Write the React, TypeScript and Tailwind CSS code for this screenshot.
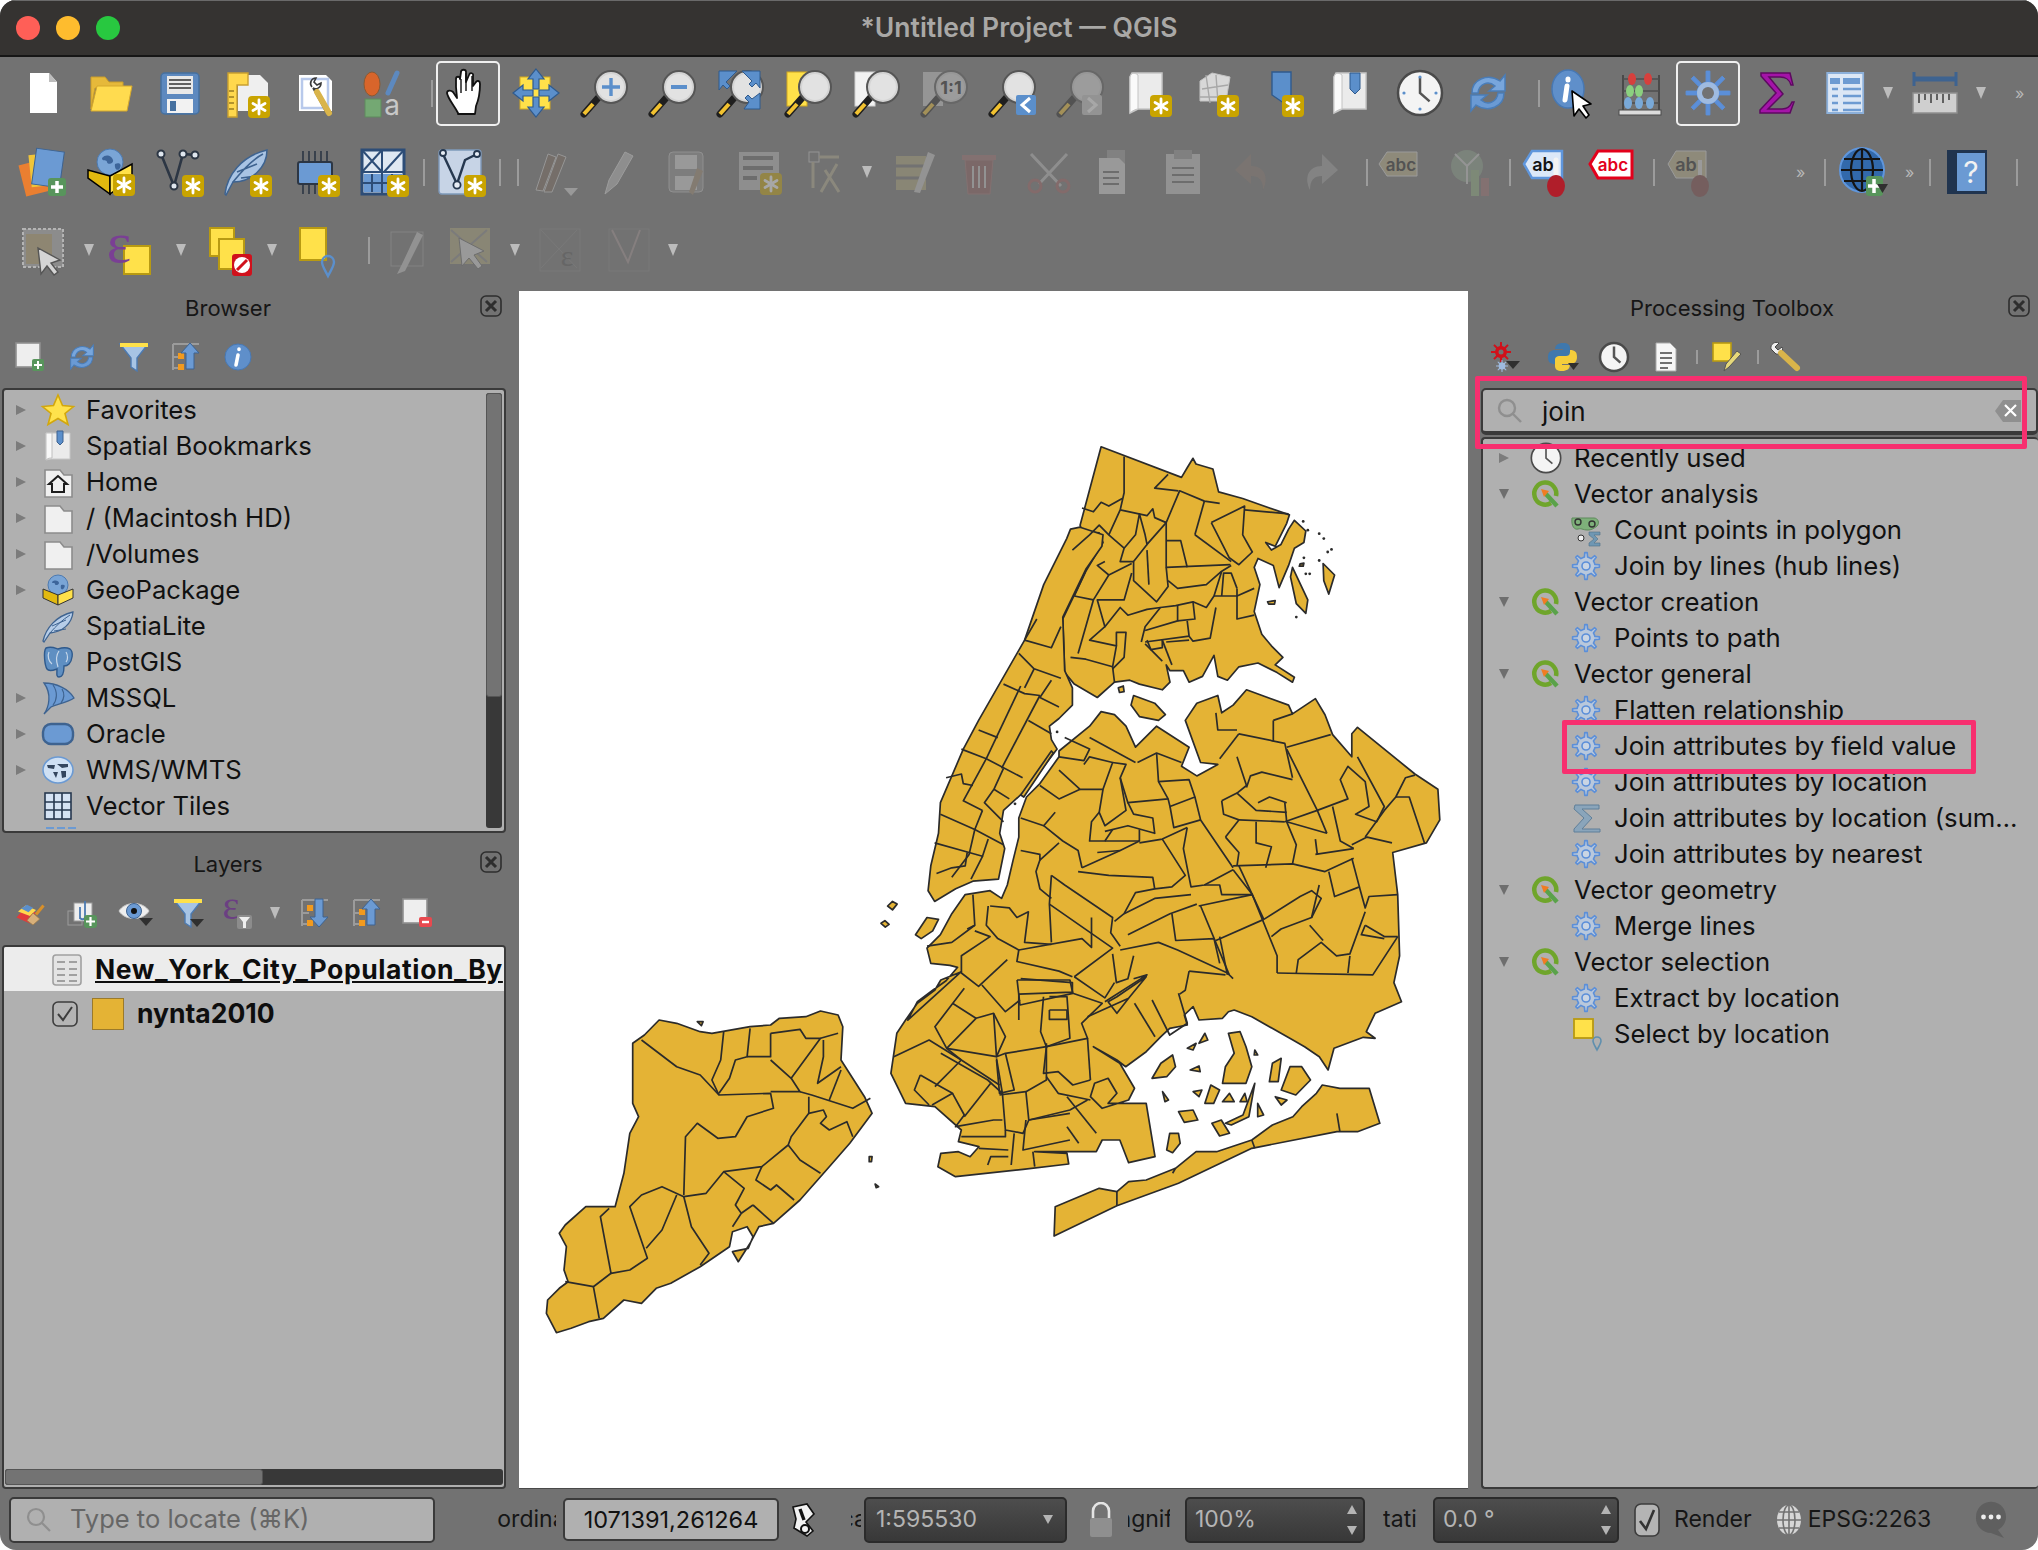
import type { ReactNode } from 'react';

// scale factors of the two map crops the outlines were traced from
const q9 = (s: string) =>
  s.trim().split(/\s+/).map((p) => {
    const [x, y] = p.split(',').map(Number);
    return `${(860 + x / 2.613).toFixed(1)},${(420 + y / 2.613).toFixed(1)}`;
  }).join(' ');

const q10 = (s: string) =>
  s.trim().split(/\s+/).map((p) => {
    const [x, y] = p.split(',').map(Number);
    return `${(530 + x / 1.704).toFixed(1)},${(960 + y / 3).toFixed(1)}`;
  }).join(' ');

const bronx = `630,70 840,150 855,125 870,100 878,115 922,128 937,188 1000,205 1122,248 1115,270 1085,330 1060,320 1075,340 1100,325 1120,285 1135,262 1165,290 1160,320 1135,335 1120,380 1095,438 1080,380 1040,362 1030,385 1045,430 1030,500 1050,560 1075,590 1105,620 1085,640 1135,672 1130,685 1090,660 1040,635 990,645 960,680 935,670 925,615 895,670 860,685 845,655 810,655 800,640 810,685 790,705 730,690 705,680 665,685 620,725 560,690 535,660 530,520 590,395 635,320 625,295 580,290 575,275`;
const manhattan = `575,280 635,300 632,330 590,390 530,515 535,655 555,700 555,745 520,780 495,800 500,835 515,860 430,970 375,1020 365,1080 378,1120 362,1200 295,1205 250,1225 195,1258 178,1230 185,1165 205,1080 210,1000 270,860 310,785 430,575 480,430 540,310 550,285`;
const queensTop = `520,865 600,800 630,762 665,770 695,800 720,855 775,800 860,855 840,905 880,930 935,900 890,895 850,785 880,740 935,720 945,765 975,745 1010,705 1120,745 1130,768 1190,728 1215,770 1235,822 1285,880 1285,820 1300,803 1450,925 1510,965 1515,1045 1480,1105 1392,1130 1405,1240 1410,1400 1395,1470 1415,1520`;
const southShore = `1440,160 1425,215 1440,235 1420,232 1370,265 1360,330 1345,290 1320,260 1300,240 1230,170 1200,150 1190,155 1180,175 1140,180 1130,140 1115,165 1120,195 1090,205 1075,230 1050,275 1015,320 1000,300 960,260 1005,310 1030,385 1020,420 975,445 955,410 962,370 985,355 1000,400 985,430 1050,430 1065,590 1020,608 1005,540 975,540 965,575 860,575 915,580 918,612 840,628 725,650 695,620 700,580 730,575 750,590 765,560 730,545 735,510 690,440 640,430 615,340 625,220 640,180 660,130 690,90 700,60 735,35`;
const brooklynWest = `125,1568 150,1520 190,1490 225,1465 255,1430 235,1425 185,1420 175,1380 210,1345 240,1290 275,1240 340,1230 370,1250 385,1215 400,1150 415,1090 415,1040 435,985 470,950 520,880`;
const rockaway = `893,828 895,740 970,685 1000,695 1020,665 1050,660 1100,625 1135,575 1170,575 1230,540 1265,495 1300,470 1315,440 1340,400 1350,375 1380,385 1430,385 1448,490 1410,515 1375,515 1230,565 1105,670 1000,737`;
const staten = `45,1118 28,1060 30,1020 50,985 65,965 58,930 62,860 50,820 60,795 95,740 145,740 160,640 170,520 185,470 175,430 175,250 195,225 220,180 250,190 290,215 310,220 375,200 410,195 425,175 470,170 495,153 525,165 533,200 530,300 570,410 583,460 545,550 510,620 460,720 415,790 390,800 375,850 355,905 345,875 372,865 380,830 370,800 345,815 340,860 290,920 240,970 215,985 190,1030 160,1020 125,1075 100,1085 70,1105`;

const islands9 = [
  '1210,375 1240,405 1225,455 1212,420', '1130,385 1170,470 1165,505 1140,480 1125,410', '715,720 770,740 798,770 780,785 730,775 708,745',
  '145,1345 175,1300 205,1305 190,1335 160,1355', '72,1270 85,1258 97,1265 85,1280', '55,1315 65,1308 76,1318 66,1325', '675,700 688,695 690,710 678,712',
  '500,865 420,980 428,985 505,870', '1065,475 1085,472 1083,481 1068,481', '1150,376 1160,374 1158,382 1148,382',
];
const specks9 = ['1158,265', '1170,288', '1200,297', '1212,310', '1222,345', '1232,338', '1160,360', '1200,367', '1165,402', '1175,402', '1140,515', '405,1003', '515,815'];
const islands10 = [
  '1060,355 1075,310 1095,285 1100,320 1085,350', '1190,220 1210,215 1220,260 1230,320 1220,370 1180,370 1185,320 1200,280', '1120,265 1135,250 1130,270',
  '1140,250 1150,220 1155,240', '1260,365 1265,310 1280,295 1275,365', '1280,390 1295,320 1315,320 1330,360 1305,405', '1105,455 1130,450 1138,480 1115,487',
  '1162,490 1178,480 1192,520 1175,528', '1085,570 1090,520 1105,520 1108,550 1095,578', '1130,395 1145,390 1140,410', '1150,430 1160,375 1175,390 1165,430',
  '1180,425 1192,400 1200,425', '1210,425 1218,400 1222,425', '1240,430 1250,465 1240,470', '1185,490 1215,465 1235,370 1225,470 1195,495',
  '1270,410 1290,420 1280,435', '1125,330 1140,318 1142,335', '1078,395 1088,420 1082,425', '1235,270 1240,285 1234,285', '578,590 583,590 582,605 578,605', '588,672 594,680 590,683',
  '285,185 295,185 292,197',
];
const lines9 = [
  '690,95 690,190 680,235', '580,230 610,240 630,215 650,225 685,205', '680,235 750,250 765,232 770,255 800,268 835,185 900,212 940,218', '832,185 770,178 805,142',
  '800,268 800,385 968,378', '800,315 838,315 855,385', '875,300 970,370', '900,212 875,300', '918,268 1005,225 1000,300 1025,345 990,378 965,360 918,268', '1005,235 1120,245',
  '680,235 650,300 690,335 720,300 730,245 745,300 750,325 800,268', '555,340 600,300 625,275 650,300', '750,325 715,370 715,420 775,475 805,435 800,385', '750,340 755,430',
  '690,335 680,370 715,370', '640,370 620,380 650,405 710,375', '650,405 610,470 560,460 590,395', '710,400 690,470 620,470 640,540 680,490 700,510 750,495 785,490',
  '805,420 830,440 905,430 945,395 970,380', '945,395 925,460 905,490 870,475 825,485 785,490 745,540 735,580', '830,485 830,525 745,550', '870,475 875,520 830,525',
  '855,525 860,565 745,580', '860,565 870,578 915,570 930,490', '925,460 985,460 1030,440', '985,440 985,520 1030,510', '945,460 950,400 970,400 985,440', '610,470 570,610',
  '640,540 600,575 670,590 660,645 590,625 550,620', '670,590 670,555 695,555 690,620 660,650', '660,645 665,685', '745,585 790,630', '750,575 760,600 790,595 790,575', '790,575 815,640', '860,575 800,580',
  '462,520 430,575 500,595 525,540', '415,610 455,650 525,675', '455,650 430,700', '500,680 470,725 520,750', '375,690 430,715 470,720', '420,695 330,885', '470,720 370,910', '440,785 500,820',
  '310,810 360,830', '265,860 330,885 425,935', '330,885 270,995 320,1020', '375,910 350,965 390,990', '350,965 325,1000 375,1050', '225,935 265,925 270,950 295,955', '210,1030 300,1070 375,1110',
  '320,1020 300,1070 285,1135 240,1195', '195,1105 285,1130 320,1140 290,1200', '335,1095 320,1140', '280,1130 275,1165 240,1170 200,1185',
  '600,830 720,895', '520,880 585,890 600,860 535,830', '520,915 575,965 635,965 660,895 600,880 585,900', '725,895 775,870 840,895', '660,895 695,900 680,935 700,1000 805,990 780,945 775,870', '780,945 860,940 875,985 810,1010 805,990',
  '810,1010 820,1065 890,1045', '875,985 890,1045 975,1170', '635,965 625,1025 640,1060 695,1020 680,935', '700,1000 715,1030 765,1040 770,1080 700,1060 640,1075', '625,1025 605,1050 600,1100 640,1100 660,1070', '640,1100 730,1100 730,1070',
  '730,1105 790,1095 855,1065', '575,965 520,990 470,955', '420,1040 480,1060 510,1025', '480,1060 530,1100 570,1125 580,1170', '420,1125 470,1135 470,1150 520,1105', '470,1150 460,1180 470,1225 500,1250', '580,1170 680,1125 730,1100', '680,1125 620,1130',
  '570,1180 650,1190 765,1195 770,1225', '790,1095 850,1190 815,1220 770,1225 720,1235 690,1290 665,1310', '855,1065 845,1120 865,1220 900,1215 975,1175', '865,1240 770,1250 690,1290', '880,1265 810,1290 700,1345', '900,1215 940,1215 945,1240 1025,1240',
  '975,1175 1025,1240 1090,1400 1090,1445', '975,1165 1130,1160 1215,1180 1290,1145', '990,1165 1055,1305', '885,1270 1025,1240', '890,1270 965,1450', '1055,1305 1150,1245 1180,1230 1205,1250 1180,1300 1100,1330 1075,1350', '930,1360 1055,1305',
  '1130,1160 1140,1110 1115,1050 1220,1080', '955,1090 990,1130 985,1165', '990,1045 955,1090', '990,1045 1110,1050', '1035,1050 1035,1105 1075,1115 1060,1170', '945,995 985,975 1035,1020 1115,1025', '945,995 950,1030 990,1045', '1115,1050 1110,1000',
  '1010,960 1020,930 1050,920 1130,940', '1040,1000 1070,985 1115,1000', '990,820 940,885', '990,820 1110,845 1130,935', '930,765 935,810 985,810', '985,880 1010,955 985,975', '1080,785 1080,840', '1130,768 1080,785', '1115,855 1230,822',
  '1115,860 1195,1020 1220,1080', '1195,1020 1275,990 1255,940 1275,905 1320,945 1330,1010 1295,1030 1350,1050 1370,1010 1300,880', '1235,1010 1255,1100 1290,1120', '1110,1050 1195,1020', '1320,1090 1370,1020 1400,985 1425,935 1450,928', '1400,985 1435,985 1475,1105',
  '1285,1110 1325,1090 1390,1105', '1290,1120 1190,1135', '1190,1095 1195,1135', '1285,1145 1305,1220 1240,1245 1225,1180', '1305,1220 1320,1275 1330,1245 1405,1240', '1200,1215 1180,1300', '1320,1285 1280,1395 1245,1400 1205,1365 1145,1410 1140,1445', '1175,1320 1210,1360',
  '1320,1320 1370,1350 1405,1350', '1320,1320 1310,1345 1370,1355', '1405,1350 1340,1450 1090,1445', '1280,1400 1275,1445', '815,1290 825,1360 925,1355 940,1420', '940,1350 960,1450', '680,1385 780,1365 830,1385 960,1445 975,1460',
  '495,1265 660,1380 560,1455', '500,1190 535,1215 660,1300 655,1340 680,1375', '500,1190 495,1265 500,1365', '415,1385 580,1355 605,1378 605,1300', '340,1270 390,1275 410,1300 440,1285 430,1365 500,1370', '295,1240 300,1320 280,1330', '335,1270 330,1320 360,1355 415,1385 410,1415 520,1440 555,1455',
  '300,1335 340,1350 265,1400 265,1445 310,1480 385,1410', '175,1375 240,1365 300,1320', '420,1460 555,1470 555,1495 415,1500 415,1568', '660,1395 670,1470 700,1460 715,1400', '665,1470 640,1510 560,1455', '715,1460 750,1450 640,1520', '860,1440 850,1490 835,1500', '860,1440 955,1450',
];
const lines10 = [
  '740,85 690,200 710,265 760,175 720,130', '760,175 790,160 810,230 795,290 710,265', '795,295 805,400 780,360 700,280', '830,60 835,135 925,100 920,60 830,60', '770,75 810,155 835,120', '875,110 870,215 880,260 810,280 795,290 790,160', '880,260 950,235 940,190 975,130 925,100',
  '950,235 955,360', '950,170 1020,115 1050,50 1000,110 985,125 1000,160 1020,115', '1060,120 1090,225 1120,190 1105,100', '1030,130 1065,230', '885,110 915,110 920,235 880,260', '885,150 915,150 915,178 885,178 885,150', '810,280 825,390 800,400 795,300', '880,250 880,360 845,395 800,405',
  '880,260 875,340 900,335 925,375 955,360', '805,400 810,510 840,520 850,480 920,450 950,420', '845,395 850,480 920,460', '880,350 900,400 955,420', '620,290 680,240 735,300 800,375', '665,345 655,390 680,435', '665,345 700,380 720,400 685,435', '735,300 690,380', '720,400 740,465 725,500 790,480 805,480', '785,370 740,470',
  '710,265 735,300', '810,510 810,530 735,530', '825,520 820,615', '857,575 860,620', '780,615 785,590 815,590', '765,565 815,570', '845,480 840,570 920,540', '915,410 965,520', '915,500 935,550', '1095,640 1100,625',
  '1000,695 1000,737', '1230,540 1235,565', '1375,460 1380,515',
  '190,240 250,320 290,345 322,405 410,400 415,445 370,470 350,530 320,535 285,490 265,530 262,705', '330,215 325,300 310,360 322,405', '375,205 370,290 350,300 340,355 322,400', '410,220 410,290 370,290', '410,220 460,208 470,235 495,235 445,355 410,300', '495,235 525,220', '500,240 500,290 490,370 530,320',
  '445,355 460,395 410,395', '460,395 480,405 550,445 580,415', '530,330 510,420', '475,410 475,460 445,530 440,555 395,620 330,635 300,700 262,710 225,680 190,705 170,740 200,895 170,930 138,940 120,770 135,745', '475,460 500,450 505,470 495,490 510,510 540,485 550,530', '440,555 460,600 495,640',
  '395,620 385,660 410,690 420,675 450,720', '330,635 365,685 350,735 360,760 345,800', '380,735 360,760', '380,735 415,790', '250,705 225,810 198,865', '262,710 275,800 305,880 290,915', '138,940 108,980 118,1075', '108,980 60,965',
];

function NycMap() {
  return (
    <svg viewBox="519 291 949 1197" className="w-full h-full">
      <g fill="#e4b335" stroke="#2b2b2b" strokeWidth="1.7" strokeLinejoin="round">
        <polygon points={q9(bronx)} />
        <polygon points={`${q9(queensTop)} ${q10(southShore)} ${q9(brooklynWest)}`} />
        <polygon points={q9(manhattan)} />
        <polygon points={q10(rockaway)} />
        <polygon points={q10(staten)} />
        {islands9.map((p) => <polygon key={p} points={q9(p)} />)}
        {islands10.map((p) => <polygon key={p} points={q10(p)} />)}
        {specks9.map((p) => {
          const [x, y] = q9(p).split(',');
          return <circle key={p} cx={x} cy={y} r="1.4" fill="#2b2b2b" stroke="none" />;
        })}
      </g>
      <g fill="none" stroke="#2b2b2b" strokeWidth="1.7" strokeLinejoin="round">
        {lines9.map((p) => <polyline key={p} points={q9(p)} />)}
        {lines10.map((p) => <polyline key={p} points={q10(p)} />)}
      </g>
    </svg>
  );
}

function Ico({ children, className = '' }: { children: ReactNode; className?: string }) {
  return <svg viewBox="0 0 48 48" className={`w-[48px] h-[48px] shrink-0 overflow-visible ${className}`}>{children}</svg>;
}

function Small({ children, className = '' }: { children: ReactNode; className?: string }) {
  return <svg viewBox="0 0 32 32" className={`w-[32px] h-[32px] shrink-0 overflow-visible ${className}`}>{children}</svg>;
}

const gearPath = (cx: number, cy: number, r1: number, r2: number, n = 8) => {
  const pts: string[] = [];
  for (let i = 0; i < n; i++) {
    const a = (i / n) * Math.PI * 2 - Math.PI / 2;
    const w = Math.PI / n;
    [[r1, a - w], [r1, a - w * 0.45], [r2, a - w * 0.22], [r2, a + w * 0.22], [r1, a + w * 0.45]].forEach(([r, t]) => {
      pts.push(`${(cx + r * Math.cos(t)).toFixed(1)} ${(cy + r * Math.sin(t)).toFixed(1)}`);
    });
  }
  return `M${pts.join('L')}Z`;
};

function Star({ x, y }: { x: number; y: number }) {
  return (
    <g>
      <rect x={x - 11} y={y - 11} width="22" height="22" rx="4" fill="#c9a400" />
      <g stroke="#fff" strokeWidth="2.8" strokeLinecap="round">
        <line x1={x} y1={y - 7} x2={x} y2={y + 7} />
        <line x1={x - 6} y1={y - 3.5} x2={x + 6} y2={y + 3.5} />
        <line x1={x - 6} y1={y + 3.5} x2={x + 6} y2={y - 3.5} />
      </g>
    </g>
  );
}

function Lens({ children }: { children?: ReactNode }) {
  return (
    <>
      <path d="M4 45 L18 29" stroke="#1f1f1f" strokeWidth="7" strokeLinecap="round" />
      <path d="M4 45 L13 35" stroke="#f2c230" strokeWidth="4" />
      <ellipse cx="31" cy="18" rx="16" ry="16" fill="#d4d4d4" stroke="#565656" strokeWidth="2" />
      <ellipse cx="31" cy="18" rx="13" ry="13" fill="#e2e2e2" />
      {children}
    </>
  );
}

function Clock({ s = 48 }: { s?: number }) {
  const c = s / 2;
  return (
    <>
      <circle cx={c} cy={c} r={c - 2} fill="#f4f4f4" stroke="#4a4a4a" strokeWidth="2.5" />
      <path d={`M${c} ${c * 0.35}V${c}L${c * 1.4} ${c * 1.35}`} fill="none" stroke="#555" strokeWidth="2.5" />
    </>
  );
}

function Refresh() {
  return (
    <>
      <path d="M8 24C8 10 24 4 36 12L41 6v16H25l6-5C24 11 15 15 14 24z" fill="#78a6dc" stroke="#4a7db8" strokeWidth="1.5" />
      <path d="M40 24C40 38 24 44 12 36L7 42V26h16l-6 5C24 37 33 33 34 24z" fill="#6a9ad4" stroke="#4a7db8" strokeWidth="1.5" />
    </>
  );
}

function Paper() {
  return (
    <>
      <path d="M8 4h30v36H14l-8 4V8z" fill="#ebebeb" stroke="#c6c6c6" strokeWidth="1.5" />
      <path d="M6 8v36c3-3 7-4 8-4V6C10 3 7 4 6 8z" fill="#fafafa" stroke="#c4c4c4" />
    </>
  );
}

function Gray({ children }: { children: ReactNode }) {
  return <g opacity="0.38">{children}</g>;
}

const blueGear = (
  <>
    <path d={gearPath(16, 16, 9, 13.5)} fill="#b9c8dc" stroke="#5b8fd9" strokeWidth="1.6" strokeLinejoin="round" />
    <circle cx="16" cy="16" r="4" fill="#c9d5e4" stroke="#5b8fd9" strokeWidth="1.6" />
  </>
);

const qgisLogo = (
  <>
    <path d="M21 25a11 11 0 1 1 5-7" fill="none" stroke="#6fa52b" strokeWidth="4.5" />
    <path d="M15 15L27 28" stroke="#5aa24a" strokeWidth="4.5" />
    <path d="M11 11l8 2-5 6z" fill="#f07c22" />
  </>
);

const Arrow = ({ className = '' }: { className?: string }) => (
  <svg viewBox="0 0 12 14" className={`w-[12px] h-[14px] shrink-0 ${className}`}><path d="M1 1h10L6 13z" fill="#bcbcbc" /></svg>
);

const Sep = ({ className = '' }: { className?: string }) => <div className={`w-[2px] h-[27px] shrink-0 bg-[#9c9c9c] ${className}`} />;

const More = ({ className = '' }: { className?: string }) => (
  <span className={`w-[14px] shrink-0 text-[16px] leading-none text-[#b8b8b8] ${className}`}>»</span>
);

function Close({ className = '' }: { className?: string }) {
  return (
    <svg viewBox="0 0 24 24" className={`w-[24px] h-[24px] ${className}`}>
      <rect x="2" y="2" width="20" height="20" rx="5" fill="none" stroke="#2e2e2e" strokeWidth="1.6" />
      <path d="M7 7l10 10M17 7L7 17" stroke="#2e2e2e" strokeWidth="3" />
    </svg>
  );
}

function TopRow1() {
  return (
    <div className="flex items-center h-[72px] pl-[20px] gap-5">
      <Ico><path d="M10 4h19l8 9v31H10z" fill="#fff" /><path d="M29 4v9h8z" fill="#bdbdbd" /></Ico>
      <Ico><path d="M3 8h14l4 5h14v6H7L3 40z" fill="#e6b93a" stroke="#c99d2a" /><path d="M9 17h35l-5 25H3z" fill="#ffdb4f" stroke="#d5a82c" /></Ico>
      <Ico>
        <rect x="5" y="4" width="38" height="41" rx="4" fill="#5d89bf" stroke="#46709f" strokeWidth="1.5" />
        <rect x="11" y="7" width="26" height="18" fill="#e9e9e9" />
        <path d="M13 11h22M13 15h22M13 19h22" stroke="#5f5f5f" strokeWidth="2" />
        <rect x="11" y="30" width="26" height="14" fill="#f2f2f2" />
        <rect x="14" y="32" width="6" height="10" fill="#46709f" />
      </Ico>
      <Ico>
        <path d="M14 6h22l8 8v28H14z" fill="#efefef" />
        <path d="M4 4h20v12H13v32H4z" fill="#ffd84d" stroke="#c9a030" strokeWidth="1.4" />
        <path d="M5 22h5M5 28h5M5 34h5M5 40h5" stroke="#9b7c22" strokeWidth="1.5" />
        <Star x={35} y={38} />
      </Ico>
      <Ico>
        <path d="M7 6h27l6 6v30H7z" fill="#fff" />
        <rect x="10" y="10" width="26" height="29" fill="none" stroke="#b8c9eb" strokeWidth="2.5" />
        <path d="M20 18c-3-3-1-9 4-9l-2 4 3 3 4-2c0 5-5 7-8 5l13 24" fill="none" stroke="#3a3a3a" strokeWidth="1.6" />
        <path d="M25 23l12 21" stroke="#d9b44a" strokeWidth="6" strokeLinecap="round" />
      </Ico>
      <Ico>
        <ellipse cx="12" cy="15" rx="8" ry="12" fill="#d8652b" stroke="#8b5a33" />
        <path d="M28 24l9-20" stroke="#5d89bf" strokeWidth="5" strokeLinecap="round" />
        <rect x="5" y="30" width="16" height="18" fill="#74a873" stroke="#5f8a5e" />
        <text x="32" y="46" fontSize="28" fill="#c8c8c8" textAnchor="middle" fontFamily="Inter">a</text>
      </Ico>
      <Sep className="ml-[3px]" />
      <div className="flex items-center justify-center w-[64px] h-[65px] -ml-[17px] shrink-0 border-2 border-[#f0f0f0] rounded-[5px]">
        <Ico>
          <path d="M14 44C10 36 4 30 3 24c0-3 4-3 6-1l4 6-1-11V10c0-3 4-3 4 0l1-7c0-3 5-3 5 0v10l3-7c1-3 5-2 4 1v10l3-4c2-2 4-1 4 2 0 10-1 15-4 22l-1 8H14z" fill="#fff" stroke="#111" strokeWidth="1.8" strokeLinejoin="round" />
          <path d="M17 10v14M22 4v18M28 7v15" stroke="#111" strokeWidth="1.4" />
        </Ico>
      </div>
      <Ico className="-ml-[8px]">
        <rect x="8" y="8" width="30" height="32" fill="#ffe14a" stroke="#d1a820" />
        <g fill="#5b8fcb" stroke="#2f5a8d" strokeWidth="1.2">
          <path d="M24 0l8 10h-5v10h-6V10h-5z" /><path d="M24 48l8-10h-5V28h-6v10h-5z" />
          <path d="M1 24l10-8v5h10v6H11v5z" /><path d="M47 24l-10-8v5H27v6h10v5z" />
        </g>
      </Ico>
      <Ico><Lens><path d="M31 9v18M22 18h18" stroke="#5b8fcb" strokeWidth="3.4" /></Lens></Ico>
      <Ico><Lens><path d="M23 18h16" stroke="#5b8fcb" strokeWidth="4" /></Lens></Ico>
      <Ico>
        <Lens />
        <path d="M3 2h18L10 13l4 4-3 3-4-4-4 5zM44 2H26l10 10-3 3 3 3 4-4 4 5zM44 40H28l5-7-4-4 3-3 4 4 8-6z" fill="#5b8fcb" stroke="#2f5a8d" />
      </Ico>
      <Ico><rect x="3" y="3" width="20" height="34" fill="#ffe14a" stroke="#d1a820" /><Lens /></Ico>
      <Ico><rect x="3" y="3" width="20" height="34" fill="#f2f2f2" stroke="#cfcfcf" /><Lens /></Ico>
      <Ico><Gray><rect x="3" y="3" width="20" height="34" fill="#cfcfcf" /><Lens /><text x="31" y="25" fontSize="18" fontWeight="700" textAnchor="middle" fill="#222" fontFamily="Inter">1:1</text></Gray></Ico>
      <Ico><Lens /><rect x="28" y="26" width="20" height="20" rx="2" fill="#5b8fcb" /><path d="M42 29l-8 7 8 7" fill="none" stroke="#fff" strokeWidth="3" /></Ico>
      <Ico><Gray><Lens /><rect x="26" y="26" width="20" height="20" rx="2" fill="#c9c9c9" /><path d="M32 29l8 7-8 7" fill="none" stroke="#fff" strokeWidth="3" /></Gray></Ico>
      <Ico><Paper /><Star x={37} y={37} /></Ico>
      <Ico>
        <path d="M8 12l12-8 18 4-4 24H8z" fill="#d8d8d8" stroke="#c4c4c4" />
        <path d="M10 20l26-4M14 6l4 28M24 6l2 28M8 28l24 0" stroke="#a8a8a8" strokeWidth="1.4" fill="none" />
        <Star x={36} y={37} />
      </Ico>
      <Ico><path d="M10 3h19v36L10 26z" fill="#5b8fcb" stroke="#2f5a8d" strokeWidth="1.4" transform="translate(2 0)" /><Star x={33} y={37} /></Ico>
      <Ico><Paper /><path d="M22 4h10v16l-5 5-5-5z" fill="#5b8fcb" stroke="#2f5a8d" /></Ico>
      <Ico><Clock /><g fill="#5b8fcb"><circle cx="24" cy="8" r="1.6" /><circle cx="24" cy="40" r="1.6" /><circle cx="8" cy="24" r="1.6" /><circle cx="40" cy="24" r="1.6" /></g></Ico>
      <Ico><Refresh /></Ico>
      <Sep className="ml-[6px]" />
      <Ico className="-ml-[12px]">
        <ellipse cx="20" cy="20" rx="16" ry="19" fill="#5f8fca" stroke="#4878b3" strokeWidth="1.5" />
        <path d="M20 10v1M19 17l-2 14" stroke="#fff" strokeWidth="5" strokeLinecap="round" />
        <path d="M24 22l2 25 5-7 7 9 3-3-6-9 8-2z" fill="#fff" stroke="#000" strokeWidth="1.6" strokeLinejoin="round" />
      </Ico>
      <Ico>
        <path d="M7 6v37M43 6v37M3 43h42" stroke="#4a4a4a" strokeWidth="2" />
        <rect x="3" y="41" width="42" height="5" fill="#dcdcdc" stroke="#4a4a4a" />
        <path d="M7 10h36M7 22h36M7 34h36" stroke="#4f4f4f" strokeWidth="1.5" />
        <ellipse cx="16" cy="10" rx="4" ry="6" fill="#d6403d" /><ellipse cx="32" cy="10" rx="4" ry="6" fill="#d6403d" />
        <ellipse cx="14" cy="22" rx="4" ry="6" fill="#8bd07f" /><ellipse cx="23" cy="22" rx="4" ry="6" fill="#8bd07f" />
        <ellipse cx="12" cy="34" rx="4" ry="6" fill="#79a9d8" /><ellipse cx="23" cy="34" rx="4" ry="6" fill="#79a9d8" /><ellipse cx="34" cy="34" rx="4" ry="6" fill="#79a9d8" />
      </Ico>
      <div className="flex items-center justify-center w-[64px] h-[65px] -ml-[8px] shrink-0 border-2 border-[#f0f0f0] rounded-[5px]">
        <Ico>
          <path d={gearPath(24, 24, 11, 22)} fill="#5b8fd9" stroke="#5b8fd9" strokeWidth="1" strokeLinejoin="round" />
          <circle cx="24" cy="24" r="11" fill="#9fbbe0" />
          <circle cx="24" cy="24" r="6" fill="#727272" />
        </Ico>
      </div>
      <Ico className="-ml-[8px]"><path d="M9 4h29l3 12h-2c-2-6-5-8-11-8H17l14 17-15 15h14c5 0 8-2 10-7h2l-4 11H8v-3l16-17L9 7z" fill="#a414a8" stroke="#5d0a60" strokeWidth="1.5" /></Ico>
      <Ico>
        <rect x="8" y="4" width="40" height="40" transform="translate(0 0) scale(0.9 1)" fill="#dce7f5" stroke="#8cb0da" strokeWidth="2" />
        <rect x="10" y="9" width="10" height="6" fill="#6d9bd2" /><rect x="23" y="9" width="17" height="6" fill="#6d9bd2" />
        <path d="M12 20h6M23 20h18M12 27h6M23 27h18M12 34h6M23 34h18M12 41h6M23 41h18" stroke="#6d9bd2" strokeWidth="2.4" />
      </Ico>
      <Arrow className="-ml-[6px]" />
      <Ico className="-ml-[3px]">
        <path d="M3 3v14M45 3v14" stroke="#3e6390" strokeWidth="3" /><path d="M3 10h42" stroke="#3e6390" strokeWidth="5" />
        <rect x="2" y="24" width="44" height="20" fill="#cfcfcf" stroke="#8f8f8f" strokeWidth="1.5" />
        <path d="M8 25v9M14 25v6M20 25v9M26 25v6M32 25v9M38 25v6" stroke="#444" strokeWidth="1.6" />
      </Ico>
      <Arrow className="-ml-[4px]" />
      <More className="ml-[8px]" />
    </div>
  );
}

function TopRow2() {
  return (
    <div className="flex items-center h-[76px] mt-[5px] pl-[20px]">
      <Ico>
        <rect x="2" y="14" width="26" height="32" fill="#ea7f31" transform="rotate(-14 14 30)" />
        <rect x="10" y="6" width="26" height="32" fill="#f0c53a" transform="rotate(-6 22 22)" />
        <rect x="14" y="2" width="28" height="36" fill="#6b9ad3" stroke="#3e6390" transform="rotate(8 28 20)" />
        <rect x="28" y="30" width="18" height="18" rx="3" fill="#58955c" /><path d="M37 33v12M31 39h12" stroke="#fff" strokeWidth="3.5" />
      </Ico>
      <Ico className="ml-[20px]">
        <circle cx="22" cy="14" r="13" fill="#7aa5d6" stroke="#4c7ab1" /><path d="M14 10c4-5 10-2 11 2s-6 5-6 2-5 0-5-4zM27 16c4-2 7 0 5 4s-6 1-5-4z" fill="#3d659a" />
        <path d="M0 22v8L22 46V28z" fill="#e2b90f" stroke="#000" strokeWidth="1.5" /><path d="M22 46L44 30V16L22 28z" fill="#ffe14a" stroke="#000" strokeWidth="1.5" />
        <Star x={36} y={37} />
      </Ico>
      <Ico className="ml-[19px]">
        <path d="M6 6l13 32L28 6l12 1" fill="none" stroke="#2c3644" strokeWidth="2.6" />
        <g fill="#dfe6ee" stroke="#2c3644" strokeWidth="2"><circle cx="6" cy="6" r="3.5" /><circle cx="19" cy="38" r="3.5" /><circle cx="28" cy="6" r="3.5" /><circle cx="40" cy="7" r="3.5" /></g>
        <Star x={38} y={38} />
      </Ico>
      <Ico className="ml-[20px]">
        <path d="M2 46C4 28 18 8 44 2 44 20 28 34 10 34L3 47z" fill="#a9c4e4" stroke="#3e6390" strokeWidth="1.5" />
        <path d="M10 34C18 24 28 12 40 6M18 30l16-2M14 24l20-8" stroke="#3e6390" strokeWidth="1.6" fill="none" />
        <Star x={38} y={38} />
      </Ico>
      <Ico className="ml-[21px]">
        <rect x="6" y="14" width="34" height="22" rx="2" fill="#6b9ad3" stroke="#2c3644" strokeWidth="2" />
        <path d="M11 14V3M17 14V3M23 14V3M29 14V3M35 14V3M11 36v10M17 36v10M23 36v10" stroke="#2c3644" strokeWidth="1.6" />
        <Star x={37} y={38} />
      </Ico>
      <Ico className="ml-[20px]">
        <rect x="2" y="2" width="42" height="44" fill="#dfe8f2" stroke="#2d4d77" strokeWidth="3" />
        <rect x="4" y="26" width="38" height="18" fill="#6b9ad3" />
        <path d="M2 24h42M22 2v44M2 2l20 22M22 2L2 24M44 2L24 24M12 26v18M32 26v18M2 35h42" stroke="#2d4d77" strokeWidth="2" />
        <Star x={38} y={38} />
      </Ico>
      <Sep className="ml-[15px]" />
      <Ico className="ml-[12px]">
        <rect x="2" y="2" width="42" height="44" rx="3" fill="#c7d4e6" stroke="#7f9abb" strokeWidth="1.4" />
        <path d="M5 4l15 32L28 12l12 -6" fill="none" stroke="#26384f" strokeWidth="2.4" />
        <g fill="#e7edf5" stroke="#26384f" strokeWidth="1.8"><circle cx="6" cy="5" r="3" /><circle cx="20" cy="37" r="3.6" /><circle cx="40" cy="6" r="3" /></g>
        <Star x={38} y={38} />
      </Ico>
      <Sep className="ml-[14px]" />
      <Sep className="ml-[16px]" />
      <Ico className="ml-[11px]">
        <Gray>
          <path d="M6 42l12-36 8 3-13 34zM14 44l14-38 8 3-14 35z" fill="#7a6a5c" stroke="#d0d0d0" />
          <path d="M34 40h14l-7 8z" fill="#d8d8d8" />
        </Gray>
      </Ico>
      <Ico className="ml-[17px]"><Gray><path d="M10 46l4-14 16-28 8 4-16 28z" fill="#bdbdbd" stroke="#e0e0e0" /></Gray></Ico>
      <Ico className="ml-[20px]"><Gray><rect x="6" y="4" width="34" height="40" rx="4" fill="#909090" stroke="#c0c0c0" /><rect x="12" y="7" width="22" height="14" fill="#d8d8d8" /><rect x="12" y="28" width="22" height="14" fill="#d8d8d8" /><path d="M26 44l8-24 6 3-10 24z" fill="#a08a70" /></Gray></Ico>
      <Ico className="ml-[24px]"><Gray><rect x="4" y="4" width="40" height="38" fill="#bdbdbd" /><path d="M8 10h30M8 20h30M8 30h14" stroke="#666" strokeWidth="4" /><Star x={36} y={36} /></Gray></Ico>
      <Ico className="ml-[20px]"><Gray><rect x="6" y="4" width="10" height="10" fill="none" stroke="#ccc" /><path d="M16 9h20M10 14v26M18 44l16-28M36 44L22 22" stroke="#b4ae8f" strokeWidth="3" /></Gray></Ico>
      <Arrow className="ml-[10px]" />
      <Ico className="ml-[17px]"><Gray><rect x="6" y="8" width="30" height="34" fill="#b0a77a" /><path d="M6 18h30M6 30h30" stroke="#727272" strokeWidth="3" /><path d="M24 44l14-40 7 3-15 38z" fill="#c9c9c9" /></Gray></Ico>
      <Ico className="ml-[17px]"><Gray><path d="M10 12h28l-3 34H13z" fill="#8a5a5a" stroke="#a07070" /><rect x="7" y="7" width="34" height="5" fill="#a07070" /><path d="M18 18v22M24 18v22M30 18v22" stroke="#c8c8c8" strokeWidth="2" /></Gray></Ico>
      <Ico className="ml-[22px]"><Gray><path d="M6 6l30 32M42 6L14 36" stroke="#bdbdbd" strokeWidth="3" /><circle cx="10" cy="38" r="6" fill="none" stroke="#a06060" strokeWidth="3" /><circle cx="38" cy="38" r="6" fill="none" stroke="#a06060" strokeWidth="3" /></Gray></Ico>
      <Ico className="ml-[18px]"><Gray><path d="M16 2h18v32H16z" fill="#9a9a9a" /><path d="M8 10h20l6 6v30H8z" fill="#d8d8d8" /><path d="M12 24h16M12 30h16M12 36h16" stroke="#666" strokeWidth="2" /></Gray></Ico>
      <Ico className="ml-[21px]"><Gray><rect x="6" y="6" width="34" height="40" fill="#c8c8c8" /><rect x="14" y="2" width="18" height="9" fill="#999" /><path d="M12 20h22M12 27h22M12 34h22" stroke="#666" strokeWidth="2" /></Gray></Ico>
      <Ico className="ml-[21px]"><Gray><path d="M22 6L6 22l16 14v-8c8 0 12 4 12 14 6-12 2-24-12-24z" fill="#8a7a70" /></Gray></Ico>
      <Ico className="ml-[19px]"><Gray><path d="M26 6l16 16-16 14v-8c-8 0-12 4-12 14-6-12-2-24 12-24z" fill="#a0a0a0" /></Gray></Ico>
      <Sep className="ml-[22px]" />
      <Ico className="ml-[9px]">
        <Gray>
          <path d="M2 16L10 4h30v24H10z" fill="#bdb389" stroke="#ddd" />
          <text x="24" y="23" fontSize="17" fontWeight="600" textAnchor="middle" fill="#222" fontFamily="Inter">abc</text>
        </Gray>
      </Ico>
      <Ico className="ml-[22px]"><Gray><circle cx="20" cy="18" r="16" fill="#8aa08a" /><path d="M20 18L8 6M20 18l12-12M20 18v18" stroke="#ccc" strokeWidth="2" /><rect x="24" y="22" width="8" height="26" fill="#90b080" /><rect x="34" y="30" width="8" height="18" fill="#a07070" /></Gray></Ico>
      <Sep className="ml-[14px]" />
      <Ico className="ml-[11px]">
        <path d="M2 16L10 3h30v27H10z" fill="#dce8f8" stroke="#5f96dc" strokeWidth="2.5" />
        <text x="21" y="23" fontSize="18" fontWeight="600" textAnchor="middle" fill="#141414" fontFamily="Inter">ab</text>
        <path d="M34 12v18" stroke="#f4f4f4" strokeWidth="5" strokeLinecap="round" />
        <ellipse cx="34" cy="38" rx="9" ry="11" fill="#b01e2a" />
      </Ico>
      <Ico className="ml-[18px]">
        <path d="M2 16L10 3h34v27H10z" fill="#fff" stroke="#e3001b" strokeWidth="3" />
        <text x="25" y="23" fontSize="17" fontWeight="600" textAnchor="middle" fill="#e3001b" fontFamily="Inter">abc</text>
      </Ico>
      <Sep className="ml-[17px]" />
      <Ico className="ml-[11px]">
        <Gray>
          <path d="M2 16L10 3h30v27H10z" fill="#bdb389" stroke="#ddd" />
          <text x="20" y="23" fontSize="18" fontWeight="600" textAnchor="middle" fill="#222" fontFamily="Inter">ab</text>
          <path d="M34 12v18" stroke="#ddd" strokeWidth="4" />
          <ellipse cx="34" cy="38" rx="9" ry="11" fill="#7a4040" />
        </Gray>
      </Ico>
      <More className="ml-[82px]" />
      <Sep className="ml-[14px]" />
      <Ico className="ml-[12px]">
        <circle cx="24" cy="22" r="22" fill="#3269ab" stroke="#5f96dc" strokeWidth="2" />
        <g fill="none" stroke="#141414" strokeWidth="2.2"><ellipse cx="24" cy="22" rx="11" ry="21" /><path d="M24 1v42M3 22h42M6 11h36M6 33h36" /></g>
        <rect x="28" y="28" width="17" height="20" rx="3" fill="#58955c" /><path d="M36 31v14M30 38h12" stroke="#fff" strokeWidth="3.5" /><path d="M39 36h11l-5.500 9z" fill="#2f2f2f" />
      </Ico>
      <More className="ml-[19px]" />
      <Sep className="ml-[10px]" />
      <Ico className="ml-[12px]">
        <rect x="4" y="2" width="40" height="44" fill="#20344f" />
        <rect x="14" y="5" width="28" height="38" fill="#6b9ad3" />
        <text x="28" y="35" fontSize="30" textAnchor="middle" fill="#f2f2f2" fontFamily="Inter">?</text>
      </Ico>
      <Sep className="ml-[25px]" />
    </div>
  );
}

function TopRow3() {
  return (
    <div className="flex items-center h-[76px] mt-[2px] pl-[20px]">
      <Ico>
        <rect x="3" y="3" width="40" height="38" fill="#8c8c8c" stroke="#b4b4b4" strokeDasharray="3 2" strokeWidth="2" />
        <rect x="6" y="8" width="26" height="30" fill="#8e8672" />
        <path d="M18 22l3 26 6-8 7 9 4-3-7-9 9-3z" fill="#d4d4d4" stroke="#555" strokeWidth="1.4" />
      </Ico>
      <Arrow className="ml-[15px]" />
      <Ico className="ml-[10px]">
        <rect x="19" y="20" width="26" height="28" fill="#ffe14a" stroke="#b89a12" strokeWidth="2" />
        <text x="14" y="36" fontSize="58" fill="#7a3f94" textAnchor="middle" fontFamily="Liberation Serif">ε</text>
      </Ico>
      <Arrow className="ml-[22px]" />
      <Ico className="ml-[17px]">
        <rect x="6" y="2" width="24" height="28" fill="#ffe14a" stroke="#b89a12" strokeWidth="2" />
        <rect x="15" y="13" width="25" height="30" fill="#ffe14a" stroke="#b89a12" strokeWidth="2" />
        <rect x="28" y="28" width="20" height="22" rx="3" fill="#d0111c" />
        <circle cx="38" cy="39" r="8" fill="#fff" /><path d="M33 44l10-10" stroke="#d0111c" strokeWidth="3" />
      </Ico>
      <Arrow className="ml-[14px]" />
      <Ico className="ml-[14px]">
        <rect x="8" y="2" width="26" height="32" fill="#ffe14a" stroke="#b89a12" strokeWidth="2" />
        <path d="M36 50c-3-6-6-10-6-14a6 6 0 0 1 12 0c0 4-3 8-6 14z" fill="none" stroke="#5b8fcb" strokeWidth="2.4" />
      </Ico>
      <Sep className="ml-[28px]" />
      <Ico className="ml-[15px]"><Gray><rect x="6" y="6" width="32" height="34" fill="none" stroke="#a0a0a0" /><path d="M12 48l6-12L32 6l6 3-18 36z" fill="#c8c8c8" /></Gray></Ico>
      <Ico className="ml-[14px]"><Gray><rect x="3" y="2" width="40" height="36" fill="#b0a77a" /><path d="M4 4l36 32M4 36L40 4" stroke="#8a8a8a" strokeWidth="2" /><path d="M12 12l3 28 7-8 9 11 4-3-8-11 10-4z" fill="#d8d8d8" stroke="#666" /></Gray></Ico>
      <Arrow className="ml-[14px]" />
      <Ico className="ml-[16px]"><g opacity="0.18"><rect x="3" y="3" width="40" height="42" fill="none" stroke="#999" /><path d="M4 4l36 38M40 4L4 42" stroke="#999" /><text x="30" y="40" fontSize="30" textAnchor="middle" fill="#333" fontFamily="Liberation Serif">ε</text></g></Ico>
      <Ico className="ml-[21px]"><g opacity="0.18"><rect x="3" y="3" width="40" height="42" fill="none" stroke="#999" /><path d="M6 4l16 32L34 4" stroke="#dbb" strokeWidth="2" fill="none" /></g></Ico>
      <Arrow className="ml-[13px]" />
    </div>
  );
}

function PanelTitle({ title, className = '' }: { title: string; className?: string }) {
  return (
    <div className={`relative h-[34px] flex items-center justify-center pr-[52px] text-[22px] text-[#161616] ${className}`}>
      {title}
      <Close className="absolute right-[5px] top-[3px]" />
    </div>
  );
}

const browserRows: { label: string; arrow: boolean; icon: ReactNode }[] = [
  { label: 'Favorites', arrow: true, icon: <path d="M16 1l4.500 10.500 11 1-8.500 7 3 11L16 24.500 6 30.500l3-11-8.500-7 11-1z" fill="#ffe24c" stroke="#d2a70d" strokeWidth="1.6" /> },
  { label: 'Spatial Bookmarks', arrow: true, icon: <><path d="M4 3h24v26H9l-5 1z" fill="#ebebeb" stroke="#c6c6c6" /><path d="M4 3v27c2-2 4-2 6-2V3z" fill="#f8f8f8" stroke="#c0c0c0" /><path d="M15 1h6v11l-3 3-3-3z" fill="#5b8fcb" stroke="#3e6390" /></> },
  { label: 'Home', arrow: true, icon: <><path d="M3 4h15l4 5h8v22H3z" fill="#f0f0f0" stroke="#8c8c8c" strokeWidth="1.6" /><path d="M16 10L7 18h3v8h12v-8h3z" fill="none" stroke="#1d1d1d" strokeWidth="2" /></> },
  { label: '/ (Macintosh HD)', arrow: true, icon: <path d="M3 4h15l4 5h8v22H3z" fill="#f0f0f0" stroke="#8c8c8c" strokeWidth="1.6" /> },
  { label: '/Volumes', arrow: true, icon: <path d="M3 4h15l4 5h8v22H3z" fill="#f0f0f0" stroke="#8c8c8c" strokeWidth="1.6" /> },
  { label: 'GeoPackage', arrow: true, icon: <><circle cx="16" cy="11" r="10" fill="#7aa5d6" stroke="#4c7ab1" /><path d="M10 8c3-3 7-1 7 1s-4 3-4 1-3 0-3-2zM19 11c3-1 5 0 3 3s-4 1-3-3z" fill="#3d659a" /><path d="M1 15v9L16 31V21z" fill="#e2b90f" stroke="#333" /><path d="M16 31l15-7v-9L16 21z" fill="#ffe14a" stroke="#333" /></> },
  { label: 'SpatiaLite', arrow: false, icon: <><path d="M1 31C4 18 14 6 31 2 30 14 20 22 8 23L2 32z" fill="#b6cde8" stroke="#3e6390" strokeWidth="1.3" /><path d="M8 23C14 16 20 10 28 5M12 21l12-2M10 16l14-6" stroke="#3e6390" fill="none" /></> },
  { label: 'PostGIS', arrow: false, icon: <><path d="M4 2c5-2 9 0 12 1 3-1 8-2 12 0 4 3 2 12-1 15-1 1-4 2-5 2 0 5-1 11-5 11-3 0-2-4-2-8-3 1-8 3-10 0S1 6 4 2z" fill="#5f8fc2" stroke="#2f5a8d" strokeWidth="1.4" /><path d="M7 6c-2 4 0 10 3 12M17 5c-3 4-3 10-1 16M24 6c2 3 2 8 0 10" fill="none" stroke="#c8d8ea" strokeWidth="1.2" /></> },
  { label: 'MSSQL', arrow: true, icon: <><path d="M2 1c12 0 25 6 30 15-7 5-18 6-23 9l-7 7c5-7 8-20 0-31z" fill="#6b9ad3" stroke="#3e6390" strokeWidth="1.3" /><path d="M11 3c5 7 4 15 0 20M20 7c3 5 2 10-1 14" fill="none" stroke="#3e6390" strokeWidth="1.2" /></> },
  { label: 'Oracle', arrow: true, icon: <rect x="1" y="6" width="30" height="20" rx="8" fill="#6b9ad3" stroke="#3e6390" strokeWidth="2.4" /> },
  { label: 'WMS/WMTS', arrow: true, icon: <><ellipse cx="16" cy="16" rx="15" ry="13" fill="#cfe0f3" stroke="#6b9ad3" strokeWidth="1.6" /><path d="M5 11h8l-1 4-6-1zM15 10h11v3l-6 1zM11 18h5l-2 6zM19 17h5v6l-4 1z" fill="#34465e" /></> },
  { label: 'Vector Tiles', arrow: false, icon: <><rect x="3" y="3" width="26" height="26" fill="#d5e3f4" stroke="#26384f" strokeWidth="1.6" /><path d="M3 12h26M3 20h26M12 3v26M20 3v26" stroke="#26384f" strokeWidth="1.6" /></> },
];

function RowArrow({ open = false }: { open?: boolean }) {
  if (open) {
    return <svg viewBox="0 0 12 12" className="w-[12px] h-[12px] shrink-0"><path d="M1 1h10L6 11z" fill="#6e6e6e" /></svg>;
  }
  return <svg viewBox="0 0 12 12" className="w-[12px] h-[12px] shrink-0"><path d="M1 1l10 5L1 11z" fill="#7c7c7c" /></svg>;
}

function BrowserPanel() {
  return (
    <>
      <PanelTitle title="Browser" />
      <div className="flex items-center h-[63px] pl-[14px] gap-[20px]">
        <Small><rect x="2" y="2" width="24" height="24" fill="#eee" stroke="#8f8f8f" strokeWidth="1.6" /><rect x="18" y="18" width="12" height="12" rx="2" fill="#58955c" /><path d="M24 20v8M20 24h8" stroke="#fff" strokeWidth="2" /></Small>
        <Small><g transform="scale(0.667)"><Refresh /></g></Small>
        <Small><path d="M2 3h28l-11 14v13l-6-4v-9z" fill="#a7c4e4" stroke="#4c7ab1" strokeWidth="1.4" /><rect x="2" y="2" width="28" height="4" fill="#ffe14a" /></Small>
        <Small><path d="M3 3v26M3 3h26M3 16h7M3 27h7" stroke="#9b9b9b" strokeWidth="2" /><rect x="8" y="12" width="6" height="6" fill="#f29a1e" /><rect x="8" y="23" width="6" height="6" fill="#f29a1e" /><path d="M20 2l9 10h-5v16h-8V12h-5z" fill="#6b9ad3" stroke="#3e6390" /></Small>
        <Small><circle cx="16" cy="16" r="13" fill="#5f8fca" stroke="#4878b3" /><path d="M17 8v.5M16 14l-2 10" stroke="#fff" strokeWidth="3.6" strokeLinecap="round" /></Small>
      </div>
      <div className="h-[445px] ml-[2px] w-[504px] flex bg-[#b0b0b0] border-2 border-[#3a3a3a] rounded-[4px] overflow-hidden">
        <div className="flex-1 pt-[2px] overflow-hidden">
          {browserRows.map((r) => (
            <div key={r.label} className="flex items-center h-[36px] pl-[11px]">
              {r.arrow ? <RowArrow /> : <div className="w-[12px] shrink-0" />}
              <Small className="ml-[15px]">{r.icon}</Small>
              <span className="ml-[12px] text-[25.7px] text-[#111]">{r.label}</span>
            </div>
          ))}
          <div className="ml-[42px] pt-[3px] flex gap-[3px]">
            <div className="w-[8px] h-[2px] bg-[#6b9ad3]" /><div className="w-[8px] h-[2px] bg-[#6b9ad3]" /><div className="w-[8px] h-[2px] bg-[#6b9ad3]" />
          </div>
        </div>
        <div className="w-[16px] my-[3px] mr-[2px] rounded-[3px] bg-[#383838] overflow-hidden">
          <div className="h-[304px] rounded-[3px] border border-[#555] bg-[#737373]" />
        </div>
      </div>
    </>
  );
}

function LayersPanel() {
  return (
    <>
      <PanelTitle title="Layers" className="mt-[14px]" />
      <div className="flex items-center h-[64px] pl-[6px]">
        <Ico className="scale-[0.75]"><path d="M6 30l12-14 14 8-8 14z" fill="#e03b3b" /><path d="M8 22l10-8 14 6-8 8z" fill="#ffd84d" /><path d="M12 18l8-5 8 4-6 6z" fill="#5b8fcb" /><path d="M20 34l8-10 9 8-9 8z" fill="#d8b07a" stroke="#9b7a4a" /><path d="M32 26l10-12" stroke="#d8902a" strokeWidth="4" /></Ico>
        <Small className="ml-[12px]"><rect x="2" y="14" width="14" height="14" fill="none" stroke="#9b9b9b" /><rect x="8" y="6" width="18" height="18" fill="#eee" stroke="#9b9b9b" /><path d="M14 10v12M19 4v16c0 3-5 3-5 0" fill="none" stroke="#4c7ab1" strokeWidth="1.8" /><rect x="18" y="18" width="13" height="13" rx="3" fill="#58955c" /><path d="M24.500 20v9M20 24.500h9" stroke="#fff" strokeWidth="2.2" /></Small>
        <Small className="ml-[21px]"><path d="M0 14C6 4 24 4 30 14 24 24 6 24 0 14z" fill="#eee" stroke="#ccc" /><circle cx="15" cy="14" r="7.500" fill="#6b9ad3" stroke="#3e6390" /><circle cx="15" cy="14" r="3" fill="#111" /><path d="M20 21h14l-7 8z" fill="#2f2f2f" /></Small>
        <Small className="ml-[21px]"><path d="M2 3h28l-11 14v13l-6-4v-9z" fill="#a7c4e4" stroke="#4c7ab1" strokeWidth="1.4" /><rect x="2" y="2" width="28" height="4" fill="#ffe14a" /><path d="M18 22h14l-7 8z" fill="#2f2f2f" /></Small>
        <Small className="ml-[17px]"><text x="10" y="22" fontSize="40" fill="#6b3f82" textAnchor="middle" fontFamily="Liberation Serif">ε</text><rect x="16" y="18" width="15" height="14" rx="2" fill="#8c8c8c" /><path d="M18 20h11l-4 5v6h-3v-6z" fill="#eee" /></Small>
        <Arrow className="ml-[16px]" />
        <Small className="ml-[18px]"><path d="M3 3v26M3 3h26M3 16h7M3 27h7" stroke="#9b9b9b" strokeWidth="2" /><rect x="8" y="8" width="6" height="6" fill="#f29a1e" /><rect x="8" y="23" width="6" height="6" fill="#f29a1e" /><path d="M20 30l9-10h-5V2h-8v18h-5z" fill="#6b9ad3" stroke="#3e6390" /></Small>
        <Small className="ml-[20px]"><path d="M3 3v26M3 3h26M3 16h7M3 27h7" stroke="#9b9b9b" strokeWidth="2" /><rect x="8" y="12" width="6" height="6" fill="#f29a1e" /><rect x="8" y="23" width="6" height="6" fill="#f29a1e" /><path d="M20 2l9 10h-5v16h-8V12h-5z" fill="#6b9ad3" stroke="#3e6390" /></Small>
        <Small className="ml-[18px]"><rect x="2" y="2" width="24" height="24" fill="#eee" stroke="#8f8f8f" strokeWidth="1.6" /><rect x="18" y="20" width="13" height="10" rx="2" fill="#e8494f" /><path d="M21 25h7" stroke="#fff" strokeWidth="2.4" /></Small>
      </div>
      <div className="flex-1 ml-[2px] w-[504px] flex flex-col bg-[#b0b0b0] border-2 border-[#3a3a3a] rounded-[4px] overflow-hidden">
        <div className="flex items-center h-[44px] bg-[#ececec] overflow-hidden">
          <Small className="ml-[47px]">
            <rect x="2" y="2" width="28" height="30" rx="3" fill="#e4e4e4" stroke="#a0a0a0" strokeWidth="1.6" />
            <path d="M6 9h8M18 9h8M6 16h8M18 16h8M6 22h8M18 22h8M6 28h8M18 28h8" stroke="#a0a0a0" strokeWidth="2" />
          </Small>
          <span className="ml-[12px] pt-[1px] text-[26.5px] tracking-[0.6px] font-bold underline text-[#0e0e0e] whitespace-nowrap">New_York_City_Population_By</span>
        </div>
        <div className="flex items-center h-[44px] pt-[1px]">
          <svg viewBox="0 0 26 26" className="w-[26px] h-[26px] ml-[48px] shrink-0">
            <rect x="1" y="1" width="24" height="24" rx="5" fill="#b4b4b4" stroke="#3d3d3d" strokeWidth="1.6" />
            <path d="M6 13l5 6L20 6" fill="none" stroke="#3d3d3d" strokeWidth="2" />
          </svg>
          <div className="w-[32px] h-[32px] ml-[14px] shrink-0 bg-[#e4b335] border border-[#9b7a2a]" />
          <span className="ml-[13px] text-[26.5px] font-bold text-[#0e0e0e]">nynta2010</span>
        </div>
        <div className="flex-1" />
        <div className="h-[16px] mx-[1px] mb-[2px] rounded-[3px] bg-[#383838] overflow-hidden">
          <div className="w-[258px] h-full rounded-[3px] border border-[#555] bg-[#737373]" />
        </div>
      </div>
    </>
  );
}

const gearIcon = blueGear;
const recentIcon = <g transform="scale(0.667)"><Clock /></g>;
const countIcon = (
  <>
    <path d="M2 4h22c4 0 6 5 3 8-4 3-6 4-9 4-6 0-6-2-10-1-3 1-7-2-6-11z" fill="#7eb07a" stroke="#5d8a5a" />
    <circle cx="8" cy="8" r="3" fill="none" stroke="#333" strokeWidth="1.4" /><circle cx="22" cy="10" r="3" fill="none" stroke="#333" strokeWidth="1.4" />
    <circle cx="11" cy="24" r="3" fill="#eee" stroke="#333" />
    <path d="M19 18h11v3h-6l4 4-4 4h6v3H19v-3l5-4-5-4z" fill="#6f97b3" stroke="#4f7086" strokeWidth="0.6" />
  </>
);
const sigmaIcon = <path d="M5 3h24v4H12l10 9-10 11h18v3H4v-3l10-11L4 7z" fill="#8aa5bb" stroke="#5f7f99" />;
const selectIcon = (
  <>
    <rect x="4" y="1" width="19" height="19" fill="#ffe14a" stroke="#b89a12" strokeWidth="1.8" />
    <path d="M27 32c-2-4-4-7-4-9a4 4 0 0 1 8 0c0 2-2 5-4 9z" fill="none" stroke="#5f8fae" strokeWidth="1.6" />
  </>
);

const toolRows: { label: string; level: 1 | 2; open?: boolean; icon: ReactNode }[] = [
  { label: 'Recently used', level: 1, icon: recentIcon },
  { label: 'Vector analysis', level: 1, open: true, icon: qgisLogo },
  { label: 'Count points in polygon', level: 2, icon: countIcon },
  { label: 'Join by lines (hub lines)', level: 2, icon: gearIcon },
  { label: 'Vector creation', level: 1, open: true, icon: qgisLogo },
  { label: 'Points to path', level: 2, icon: gearIcon },
  { label: 'Vector general', level: 1, open: true, icon: qgisLogo },
  { label: 'Flatten relationship', level: 2, icon: gearIcon },
  { label: 'Join attributes by field value', level: 2, icon: gearIcon },
  { label: 'Join attributes by location', level: 2, icon: gearIcon },
  { label: 'Join attributes by location (summary)', level: 2, icon: sigmaIcon },
  { label: 'Join attributes by nearest', level: 2, icon: gearIcon },
  { label: 'Vector geometry', level: 1, open: true, icon: qgisLogo },
  { label: 'Merge lines', level: 2, icon: gearIcon },
  { label: 'Vector selection', level: 1, open: true, icon: qgisLogo },
  { label: 'Extract by location', level: 2, icon: gearIcon },
  { label: 'Select by location', level: 2, icon: selectIcon },
];

function ToolboxPanel() {
  return (
    <>
      <PanelTitle title="Processing Toolbox" className="mr-[2px]" />
      <div className="flex items-center h-[63px] pl-[8px]">
        <Small>
          <path d={gearPath(13, 11, 6, 10)} fill="#d1101a" /><circle cx="13" cy="11" r="2.500" fill="#727272" />
          <path d={gearPath(14, 25, 3.500, 6)} fill="#9fbbe0" /><path d="M18 20h14l-7 8z" fill="#2f2f2f" />
        </Small>
        <Small className="ml-[26px]">
          <path d="M8 9c0-5 3-7 8-7s7 2 7 5v6c0 3-2 4-5 4h-6c-2 0-4 1-4 4v2c-5 0-7-2-7-7s3-7 7-7h8V8H8z" fill="#3f78ad" transform="translate(1 0)" />
          <path d="M24 23c0 5-3 7-8 7s-7-2-7-5v-6c0-3 2-4 5-4h6c2 0 4-1 4-4v-2c5 0 7 2 7 7s-3 7-7 7h-8v1h8z" fill="#f5cd3b" />
          <path d="M22 22h11l-5.500 7z" fill="#2f2f2f" />
        </Small>
        <Small className="ml-[20px]"><Clock s={32} /></Small>
        <Small className="ml-[20px]"><path d="M6 2h14l6 6v22H6z" fill="#f6f6f6" stroke="#aaa" /><path d="M10 12h12M10 17h12M10 22h12M10 27h8" stroke="#444" strokeWidth="1.6" /></Small>
        <Sep className="ml-[14px] !h-[14px]" />
        <Small className="ml-[13px]"><rect x="2" y="2" width="18" height="18" fill="#ffe14a" stroke="#b89a12" strokeWidth="1.6" /><path d="M13 30l2-7 11-13 4 3-12 13z" fill="#e6d87a" stroke="#555" /></Small>
        <Sep className="ml-[14px] !h-[14px]" />
        <Small className="ml-[10px]">
          <path d="M2 8c-1-5 4-8 8-6L6 6l3 3 4-3c2 4-2 8-6 7z" fill="#f0f0f0" stroke="#444" />
          <path d="M12 12l16 15" stroke="#d9b44a" strokeWidth="6" strokeLinecap="round" />
        </Small>
      </div>
      <div className="h-[47px] ml-[1px] flex items-center bg-[#b0b0b0] border-2 border-[#3a3a3a] rounded-[5px] border-b-[4px]">
        <svg viewBox="0 0 26 26" className="w-[26px] h-[26px] ml-[14px] shrink-0" fill="none" stroke="#8f8f8f" strokeWidth="2.4">
          <circle cx="10" cy="10" r="8" /><path d="M16 16l8 8" />
        </svg>
        <span className="ml-[19px] pt-[2px] text-[26px] text-[#111]">join</span>
        <svg viewBox="0 0 26 22" className="w-[26px] h-[22px] ml-auto mr-[15px] shrink-0">
          <path d="M8 0h18v22H8L0 11z" fill="#8f8f8f" />
          <path d="M10 5l11 11M21 5L10 16" stroke="#fff" strokeWidth="2.2" />
        </svg>
      </div>
      <div className="flex-1 ml-[1px] mt-[2px] pt-[1px] bg-[#b0b0b0] border-2 border-[#3a3a3a] border-r-0 rounded-[4px] overflow-hidden">
        {toolRows.map((r) => (
          <div key={r.label} className={r.level === 1 ? 'flex items-center h-[36px] pl-[15px]' : 'flex items-center h-[36px] pl-[87px] pr-[14px]'}>
            {r.level === 1 && (r.open ? <RowArrow open /> : <RowArrow />)}
            <Small className={r.level === 1 ? 'ml-[20px]' : ''}>{r.icon}</Small>
            <span className="ml-[12px] text-[25.7px] text-[#111] truncate">{r.label}</span>
          </div>
        ))}
      </div>
    </>
  );
}

function Spin({ value, className = '' }: { value: string; className?: string }) {
  return (
    <div className={`h-[46px] flex items-center pl-[8px] pr-[6px] shrink-0 rounded-[5px] border-2 border-[#2b2b2b] bg-gradient-to-b from-[#4d4d4d] to-[#383838] text-[#b4b4b4] ${className}`}>
      {value}
      <div className="ml-auto flex flex-col gap-[12px]">
        <svg viewBox="0 0 10 9" className="w-[10px] h-[9px]"><path d="M5 0l5 9H0z" fill="#b4b4b4" /></svg>
        <svg viewBox="0 0 10 9" className="w-[10px] h-[9px]"><path d="M0 0h10L5 9z" fill="#b4b4b4" /></svg>
      </div>
    </div>
  );
}

function Clipped({ text, className = '' }: { text: string; className?: string }) {
  return <div className={`flex justify-center overflow-hidden whitespace-nowrap shrink-0 text-[#161616] ${className}`}>{text}</div>;
}

function StatusBar() {
  return (
    <div className="h-[61px] flex items-center text-[23px]">
      <div className="ml-[9px] w-[426px] h-[46px] shrink-0 flex items-center rounded-[5px] border-2 border-[#3a3a3a] bg-[#b0b0b0] text-[#666] text-[25.5px]">
        <svg viewBox="0 0 26 26" className="w-[26px] h-[26px] ml-[15px] shrink-0" fill="none" stroke="#8f8f8f" strokeWidth="2.2">
          <circle cx="10" cy="10" r="8" /><path d="M16 16l8 8" />
        </svg>
        <span className="ml-[18px]">Type to locate (⌘K)</span>
      </div>
      <Clipped text="Coordinate" className="ml-[62px] w-[59px]" />
      <div className="ml-[7px] w-[216px] h-[43px] shrink-0 flex items-center justify-center rounded-[5px] border-2 border-[#3a3a3a] bg-[#b0b0b0] text-[#111] text-[23.5px]">1071391,261264</div>
      <svg viewBox="0 0 30 34" className="ml-[9px] w-[30px] h-[34px] shrink-0">
        <path d="M5 4l14-3 7 10-8 8 7 9-6 5-13-8 2-9z" fill="#f2f2f2" stroke="#111" strokeWidth="1.6" />
        <path d="M12 6l4 11" stroke="#111" strokeWidth="3.4" />
        <circle cx="17" cy="26" r="4" fill="none" stroke="#111" strokeWidth="2" />
      </svg>
      <Clipped text="Scale" className="ml-[33px] w-[10px]" />
      <div className="ml-[3px] w-[203px] h-[46px] shrink-0 flex items-center pl-[10px] pr-[12px] rounded-[5px] border-2 border-[#2b2b2b] bg-gradient-to-b from-[#4d4d4d] to-[#383838] text-[#b4b4b4]">
        1:595530
        <svg viewBox="0 0 10 9" className="ml-auto w-[10px] h-[9px]"><path d="M0 0h10L5 9z" fill="#b4b4b4" /></svg>
      </div>
      <svg viewBox="0 0 26 36" className="ml-[21px] w-[26px] h-[36px] shrink-0">
        <path d="M5 16V9a8 8 0 0 1 16 0v7" fill="none" stroke="#e4e4e4" strokeWidth="2.6" />
        <rect x="2" y="16" width="22" height="19" rx="2" fill="#8f8f8f" />
      </svg>
      <Clipped text="Magnifier" className="ml-[14px] w-[42px]" />
      <Spin value="100%" className="ml-[15px] w-[180px]" />
      <Clipped text="Rotation" className="ml-[18px] w-[33px]" />
      <Spin value="0.0 °" className="ml-[17px] w-[186px]" />
      <svg viewBox="0 0 26 34" className="ml-[15px] w-[26px] h-[34px] shrink-0">
        <rect x="1" y="1" width="24" height="32" rx="6" fill="#b4b4b4" stroke="#3d3d3d" strokeWidth="1.6" />
        <path d="M6 18l6 8L20 7" fill="none" stroke="#333" strokeWidth="2.6" />
      </svg>
      <span className="ml-[14px] text-[#161616]">Render</span>
      <svg viewBox="0 0 26 34" className="ml-[24px] w-[26px] h-[34px] shrink-0">
        <ellipse cx="13" cy="17" rx="12" ry="15" fill="#d6d6d6" />
        <path d="M13 2v30M1 17h24M3 9h20M3 25h20" stroke="#727272" strokeWidth="1.6" /><ellipse cx="13" cy="17" rx="6" ry="15" fill="none" stroke="#727272" strokeWidth="1.6" />
      </svg>
      <span className="ml-[6px] text-[#161616]">EPSG:2263</span>
      <svg viewBox="0 0 34 40" className="ml-[43px] w-[34px] h-[40px] shrink-0">
        <path d="M2 17a15 15 0 1 1 22 13l6 8-13-5A15 15 0 0 1 2 17z" fill="#5f5f5f" />
        <circle cx="9.500" cy="17" r="2.400" fill="#eee" /><circle cx="17" cy="17" r="2.400" fill="#eee" /><circle cx="24.500" cy="17" r="2.400" fill="#eee" />
      </svg>
    </div>
  );
}

export default function App() {
  return (
    <div className="relative w-[2038px] h-[1550px] bg-white overflow-hidden font-[Inter,'Liberation_Sans',sans-serif]">
      <div className="h-full flex flex-col rounded-[16px] overflow-hidden bg-[#727272]">
        <div className="h-[57px] shrink-0 grid grid-cols-[1fr_auto_1fr] items-center bg-[#353331] border-t border-t-[#6a6a6a] border-b-2 border-b-[#161616]">
          <div className="flex pl-[16px] gap-[16px]">
            <div className="w-[24px] h-[24px] rounded-full bg-[#ff5f57]" />
            <div className="w-[24px] h-[24px] rounded-full bg-[#febc2e]" />
            <div className="w-[24px] h-[24px] rounded-full bg-[#28c840]" />
          </div>
          <div className="text-[26.5px] font-semibold text-[#a9a8a6]">*Untitled Project — QGIS</div>
        </div>
        <div className="shrink-0 h-[234px]">
          <TopRow1 />
          <TopRow2 />
          <TopRow3 />
        </div>
        <div className="flex-1 flex min-h-0">
          <div className="w-[508px] shrink-0 flex flex-col">
            <BrowserPanel />
            <LayersPanel />
          </div>
          <div className="ml-[11px] w-[949px] shrink-0 bg-white border-b border-[#4a4a4a]">
            <NycMap />
          </div>
          <div className="ml-[12px] flex-1 flex flex-col min-w-0">
            <ToolboxPanel />
          </div>
        </div>
        <StatusBar />
      </div>
      <div className="absolute left-[1475px] top-[376px] w-[552px] h-[73px] border-[5px] border-[#f72f6f] rounded-[2px]" />
      <div className="absolute left-[1562px] top-[720px] w-[414px] h-[54px] border-[5px] border-[#f72f6f] rounded-[2px]" />
    </div>
  );
}
